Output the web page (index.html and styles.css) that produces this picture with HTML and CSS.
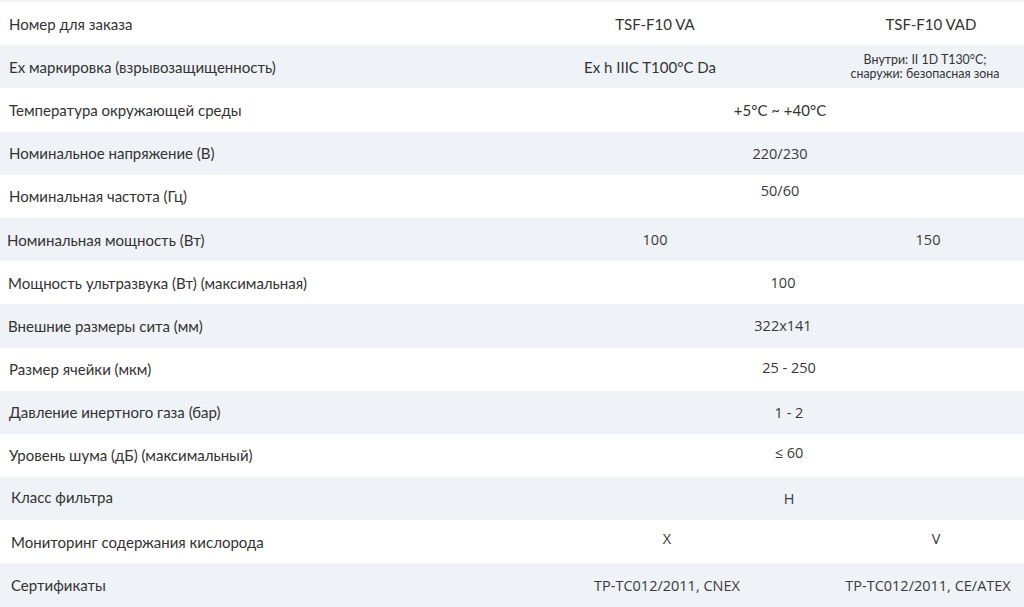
FILE: index.html
```html
<!DOCTYPE html>
<html lang="ru">
<head>
<meta charset="utf-8">
<title>Характеристики</title>
<link rel="stylesheet" href="styles.css">
</head>
<body>
<div class="viewport">
  <div class="spec">
    <div class="row">
      <div class="label">Номер для заказа</div>
      <div class="val">TSF-F10 VA</div>
      <div class="val r3">TSF-F10 VAD</div>
    </div>
    <div class="row alt">
      <div class="label">Ex маркировка (взрывозащищенность)</div>
      <div class="val l8">Ex h IIIC T100°C Da</div>
      <div class="val small">Внутри: II 1D T130°C;<br>снаружи: безопасная зона</div>
    </div>
    <div class="row">
      <div class="label">Температура окружающей среды</div>
      <div class="val span l4">+5°C ~ +40°C</div>
    </div>
    <div class="row alt">
      <div class="label">Номинальное напряжение (В)</div>
      <div class="val span num l4">220/230</div>
    </div>
    <div class="row">
      <div class="label">Номинальная частота (Гц)</div>
      <div class="val span num up6 l4">50/60</div>
    </div>
    <div class="row alt">
      <div class="label l7">Номинальная мощность (Вт)</div>
      <div class="val num">100</div>
      <div class="val num">150</div>
    </div>
    <div class="row">
      <div class="label l8">Мощность ультразвука (Вт) (максимальная)</div>
      <div class="val span num">100</div>
    </div>
    <div class="row alt">
      <div class="label l8">Внешние размеры сита (мм)</div>
      <div class="val span num">322x141</div>
    </div>
    <div class="row">
      <div class="label">Размер ячейки (мкм)</div>
      <div class="val span num up2 r6">25 - 250</div>
    </div>
    <div class="row alt">
      <div class="label">Давление инертного газа (бар)</div>
      <div class="val span num r6">1 - 2</div>
    </div>
    <div class="row">
      <div class="label">Уровень шума (дБ) (максимальный)</div>
      <div class="val span num up4 r6">≤ 60</div>
    </div>
    <div class="row alt">
      <div class="label l11 up2">Класс фильтра</div>
      <div class="val span num r6">H</div>
    </div>
    <div class="row">
      <div class="label l11">Мониторинг содержания кислорода</div>
      <div class="val num up4 r20">X</div>
      <div class="val num up4 r14">V</div>
    </div>
    <div class="row alt">
      <div class="label l11">Сертификаты</div>
      <div class="val num r20">TP-TC012/2011, CNEX</div>
      <div class="val num">TP-TC012/2011, CE/ATEX</div>
    </div>
  </div>
</div>
</body>
</html>
```
FILE: styles.css
```css
html, body {
  margin: 0;
  padding: 0;
  background: #ffffff;
  overflow: hidden;
}

.viewport {
  width: 1024px;
  height: 607px;
  overflow: hidden;
}

.spec {
  width: 1056px;
  border-top: 2px solid #f2f4f8;
  font-family: "Lato", "Liberation Sans", sans-serif;
  font-size: 15px;
  color: #333333;
}

.row {
  display: grid;
  grid-template-columns: 510px 290px 256px;
  height: 43.2px;
  align-items: center;
  background: #ffffff;
}

.row.alt {
  background: #eff2f7;
}

.label {
  padding-left: 9px;
  white-space: nowrap;
}

.label.l7 { padding-left: 7px; }
.label.l8 { padding-left: 8px; }
.label.l11 { padding-left: 11px; }

.val {
  text-align: center;
  white-space: nowrap;
}

.val.span {
  grid-column: 2 / 4;
}

.val.num {
  font-family: "Open Sans", "Noto Sans", sans-serif;
  font-size: 14.5px;
  color: #3a3a3a;
}

.val.small {
  font-size: 12.4px;
  line-height: 14px;
  padding-right: 6px;
}

.up2 { padding-bottom: 4px; }
.up4 { padding-bottom: 6px; }
.up6 { padding-bottom: 12px; }
.r3 { padding-left: 6px; }
.r6 { padding-left: 12px; }
.r14 { padding-left: 16px; }
.r20 { padding-left: 24px; }
.l4 { padding-right: 6px; }
.l8 { padding-right: 10px; }
```
